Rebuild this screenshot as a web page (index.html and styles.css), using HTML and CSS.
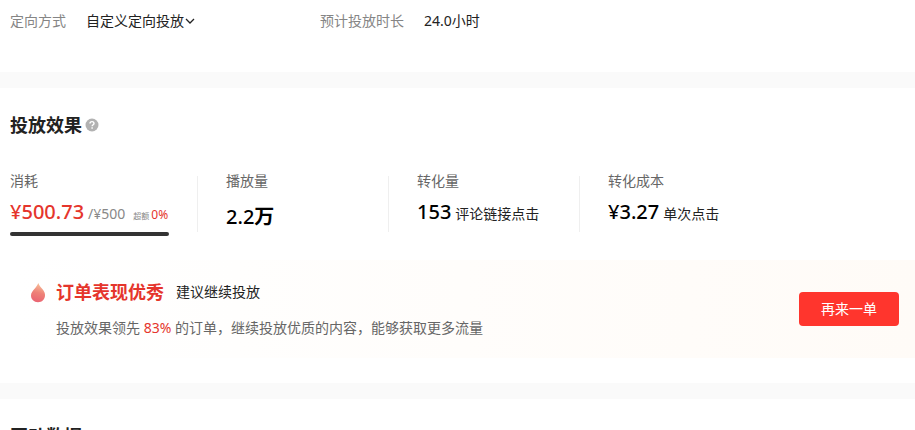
FILE: index.html
```html
<!DOCTYPE html>
<html lang="zh-CN">
<head>
  <meta charset="UTF-8" />
  <title>投放效果</title>
  <link rel="stylesheet" href="styles.css">
</head>
<body>
  <main>
  <section class="panel info">
    <div class="info-item info-target">
      <span class="info-label">定向方式</span>
      <button type="button" class="info-toggle">自定义定向投放<svg class="arrow" viewBox="0 0 10 10"><path d="M1 3l4 4 4-4" fill="none" stroke="#222" stroke-width="1.3" /></svg></button>
    </div>
    <div class="info-item">
      <span class="info-label">预计投放时长</span>
      <span>24.0小时</span>
    </div>
  </section>

  <section class="panel effect">
    <h2>投放效果
      <svg class="help" viewBox="0 0 14 14"><circle cx="7" cy="7" r="6.5" fill="#b2b2b2" /><path d="M5 5.6C5 4.3 5.8 3.6 7 3.6s2 .7 2 1.8c0 1.2-1.9 1.4-1.9 2.9M7.1 9.3v1.4" fill="none" stroke="#fff" stroke-width="1.4" /></svg>
    </h2>

    <div class="stats">
      <div class="stat stat-cost">
        <span class="stat-label">消耗</span>
        <div class="stat-value"><strong class="red">¥500.73</strong><span class="budget">/¥500</span><span class="over">超额</span><span class="over-rate">0%</span></div>
        <div class="bar"></div>
      </div>
      <div class="stat">
        <span class="stat-label">播放量</span>
        <div class="stat-value stat-plays"><strong>2.2<b>万</b></strong></div>
      </div>
      <div class="stat">
        <span class="stat-label">转化量</span>
        <div class="stat-value"><strong>153</strong><span class="unit">评论链接点击</span></div>
      </div>
      <div class="stat">
        <span class="stat-label">转化成本</span>
        <div class="stat-value"><strong>¥3.27</strong><span class="unit">单次点击</span></div>
      </div>
    </div>

    <div class="banner">
      <svg class="flame" viewBox="0 0 16 20">
        <defs>
          <linearGradient id="flameFill" x1="0.6" y1="0" x2="0.4" y2="1">
            <stop offset="0" stop-color="#f8c39b" />
            <stop offset="0.5" stop-color="#ee8278" />
            <stop offset="1" stop-color="#ea6372" />
          </linearGradient>
        </defs>
        <path d="M8.300 0C9 3 12 5 13.500 7.500C14.500 9 15 10.500 15 12.300C15 16.500 12 19.300 8 19.300S1 16.500 1 12.600C1 9.500 2.800 8 4.600 5.700C6 4 7.600 2.300 8.300 0z" fill="url(#flameFill)" />
      </svg>
      <div class="banner-text">
        <div class="banner-title"><h3>订单表现优秀</h3><span>建议继续投放</span></div>
        <p>投放效果领先 <em>83%</em> 的订单，继续投放优质的内容，能够获取更多流量</p>
      </div>
      <button type="button" class="again">再来一单</button>
    </div>
  </section>

  <section class="panel data">
    <h2>互动数据</h2>
  </section>
  </main>
</body>
</html>
```
FILE: styles.css
```css
body {
  margin: 0;
  background-color: #fafafa;
  color: #222;
  font-family: "Noto Sans", "Noto Sans CJK SC", sans-serif;
  font-size: 14px;
  line-height: 20px;
}

main {
  display: flex;
  flex-direction: column;
  gap: 16px;
}

.panel {
  background-color: #fff;
  padding-left: 10px;
}

h2,
h3,
p {
  margin: 0;
}

button {
  font-family: inherit;
  font-size: 14px;
  line-height: 20px;
  border: none;
  cursor: pointer;
}

.info {
  display: flex;
  padding-top: 11px;
  padding-bottom: 41px;
}

.info-item {
  display: flex;
  gap: 20px;
}

.info-target {
  width: 310px;
}

.info-label {
  color: #858585;
}

.info-toggle {
  display: flex;
  align-items: center;
  gap: 1px;
  padding: 0;
  background: none;
  color: #222;
}

.arrow {
  width: 10px;
  height: 10px;
}

h2 {
  display: flex;
  align-items: center;
  gap: 3px;
  font-size: 18px;
  line-height: 26px;
}

.help {
  width: 14px;
  height: 14px;
}

.effect {
  padding-top: 24px;
  padding-bottom: 25px;
}

.stats {
  display: flex;
  margin-top: 38px;
}

.stat {
  box-sizing: border-box;
  width: 191px;
  height: 56px;
  padding-left: 28px;
  border-right: 1px solid #efefef;
}

.stat:first-child {
  width: 188px;
  padding-left: 0;
}

.stat:last-child {
  border-right: none;
}

.stat-label {
  display: block;
  margin-top: -5px;
  color: #666;
}

.stat-value {
  display: flex;
  align-items: baseline;
  margin-top: 7px;
  line-height: 28px;
  white-space: nowrap;
}

.stat-value strong {
  color: #000;
  font-size: 20px;
  font-weight: 500;
}

.stat-value .red {
  color: #e5352c;
}

.stat-plays {
  margin-top: 12px;
}

.budget {
  margin-left: 4px;
  color: #888;
}

.over {
  margin-left: 8px;
  color: #888;
  font-size: 8px;
}

.over-rate {
  margin-left: 2px;
  color: #e5352c;
  font-size: 12px;
}

.unit {
  margin-left: 4px;
}

.bar {
  width: 159px;
  height: 4px;
  margin-top: 2px;
  border-radius: 2px;
  background-color: #333;
}

.banner {
  display: flex;
  align-items: center;
  margin-top: 28px;
  padding: 19px 16px 20px 20px;
  background: linear-gradient(90deg, #fff, #fffbf7);
}

.flame {
  align-self: flex-start;
  width: 16px;
  height: 20px;
  margin-top: 4px;
}

.banner-text {
  flex: 1;
  margin-left: 10px;
}

.banner-title {
  display: flex;
  align-items: center;
  gap: 12px;
}

h3 {
  color: #e5352c;
  font-size: 18px;
  line-height: 26px;
}

.banner p {
  margin-top: 13px;
  color: #666;
}

.banner em {
  color: #e5352c;
  font-style: normal;
}

.again {
  width: 100px;
  height: 34px;
  border-radius: 4px;
  background-color: #ff352d;
  color: #fff;
}

.data {
  padding-top: 24px;
  padding-bottom: 24px;
}
```
